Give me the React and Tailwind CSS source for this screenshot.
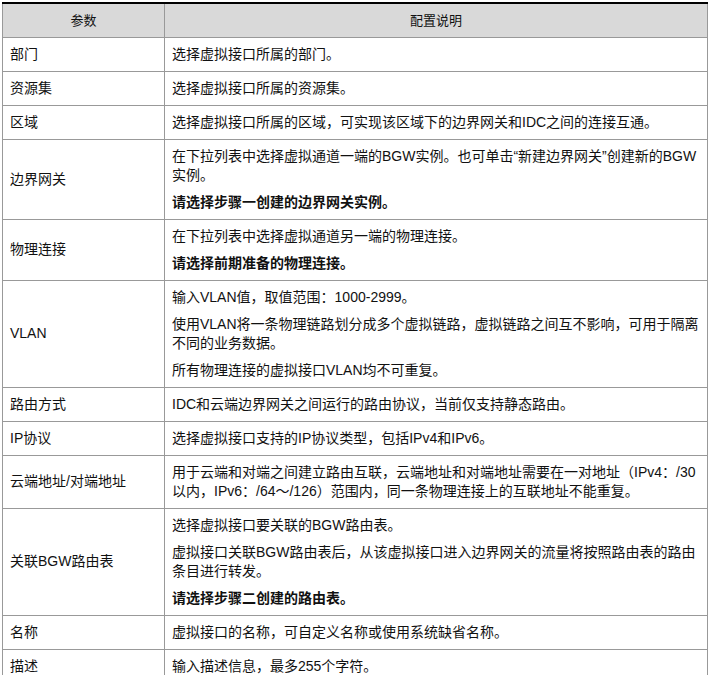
import React from "react";

const rows = [
  ["部门", ["选择虚拟接口所属的部门。"]],
  ["资源集", ["选择虚拟接口所属的资源集。"]],
  ["区域", ["选择虚拟接口所属的区域，可实现该区域下的边界网关和IDC之间的连接互通。"]],
  ["边界网关", ["在下拉列表中选择虚拟通道一端的BGW实例。也可单击“新建边界网关”创建新的BGW实例。", { b: "请选择步骤一创建的边界网关实例。" }]],
  ["物理连接", ["在下拉列表中选择虚拟通道另一端的物理连接。", { b: "请选择前期准备的物理连接。" }]],
  ["VLAN", ["输入VLAN值，取值范围：1000-2999。", "使用VLAN将一条物理链路划分成多个虚拟链路，虚拟链路之间互不影响，可用于隔离不同的业务数据。", "所有物理连接的虚拟接口VLAN均不可重复。"]],
  ["路由方式", ["IDC和云端边界网关之间运行的路由协议，当前仅支持静态路由。"]],
  ["IP协议", ["选择虚拟接口支持的IP协议类型，包括IPv4和IPv6。"]],
  ["云端地址/对端地址", ["用于云端和对端之间建立路由互联，云端地址和对端地址需要在一对地址（IPv4：/30以内，IPv6：/64～/126）范围内，同一条物理连接上的互联地址不能重复。"]],
  ["关联BGW路由表", ["选择虚拟接口要关联的BGW路由表。", "虚拟接口关联BGW路由表后，从该虚拟接口进入边界网关的流量将按照路由表的路由条目进行转发。", { b: "请选择步骤二创建的路由表。" }]],
  ["名称", ["虚拟接口的名称，可自定义名称或使用系统缺省名称。"]],
  ["描述", ["输入描述信息，最多255个字符。"]],
];

export default function App() {
  return (
    <div className="bg-white pl-[2px] pt-[2px]" style={{ fontFamily: '"Liberation Sans", "Noto Sans CJK SC", sans-serif' }}>
      <table className="w-[706px] border-collapse text-[14px] leading-[19px] text-[#111]">
        <thead>
          <tr className="bg-[#d9d9d9]">
            <th className="w-[162px] border border-[#999] border-t-2 border-t-black h-[34px] font-normal text-[13px]">参数</th>
            <th className="border border-[#999] border-t-2 border-t-black font-normal text-[13px]">配置说明</th>
          </tr>
        </thead>
        <tbody>
          {rows.map(([k, ps]) => (
            <tr key={k}>
              <td className="border border-[#999] px-[7px] py-[7px] align-middle">{k}</td>
              <td className="border border-[#999] px-[7px] py-[7px]">
                {ps.map((p, i) => (
                  <p key={i} className={i < ps.length - 1 ? "mb-[8px]" : ""}>
                    {typeof p === "string" ? p : <b>{p.b}</b>}
                  </p>
                ))}
              </td>
            </tr>
          ))}
        </tbody>
      </table>
    </div>
  );
}
